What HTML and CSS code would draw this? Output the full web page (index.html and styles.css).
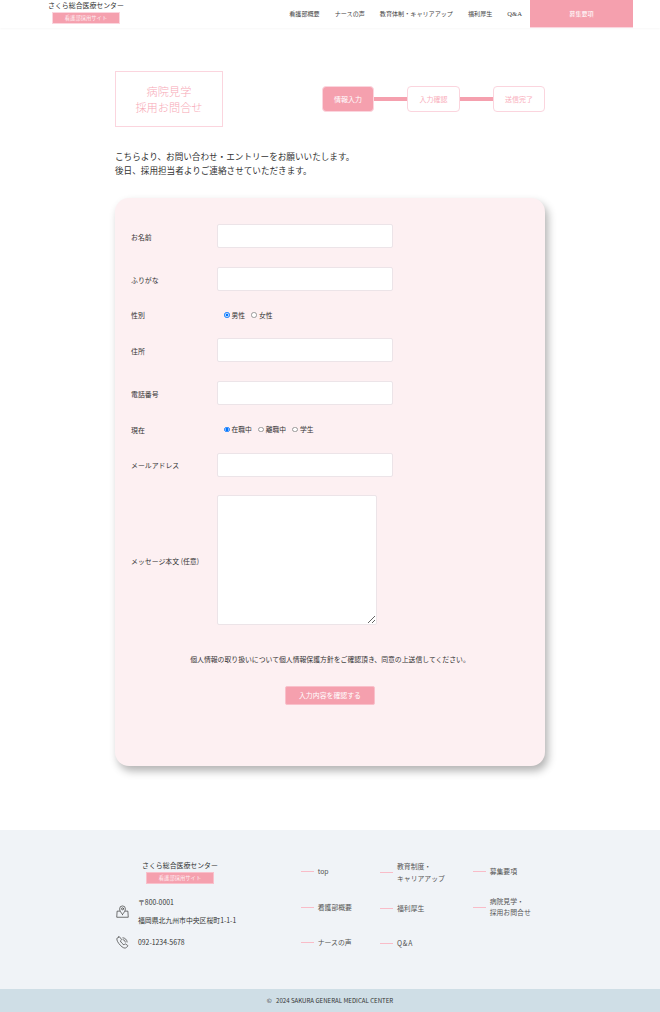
FILE: index.html
```html
<!DOCTYPE html>
<html lang="ja">
<head>
<meta charset="utf-8">
<title>病院見学・採用お問合せ</title>
<link rel="stylesheet" href="styles.css">
</head>
<body>
<header class="site-header">
  <a class="logo" href="#">
    <span class="logo-name">さくら総合医療センター</span>
    <span class="logo-badge">看護部採用サイト</span>
  </a>
  <nav class="global-nav">
    <a href="#">看護部概要</a>
    <a href="#">ナースの声</a>
    <a href="#">教育体制・キャリアアップ</a>
    <a href="#">福利厚生</a>
    <a class="nav-qa" href="#">Q&amp;A</a>
    <a class="nav-cta" href="#">募集要項</a>
  </nav>
</header>

<main class="main">
  <div class="title-row">
    <h1 class="page-title">病院見学<br>採用お問合せ</h1>
    <ol class="steps">
      <li class="step step-active">情報入力</li>
      <li class="step-line"></li>
      <li class="step step-middle">入力確認</li>
      <li class="step-line"></li>
      <li class="step">送信完了</li>
    </ol>
  </div>
  <p class="intro">こちらより、お問い合わせ・エントリーをお願いいたします。<br>後日、採用担当者よりご連絡させていただきます。</p>

  <form class="card">
    <div class="fields">
      <div class="row"><label class="label">お名前</label><input class="input" type="text"></div>
      <div class="row"><label class="label">ふりがな</label><input class="input" type="text"></div>
      <div class="row row-radio">
        <span class="label">性別</span>
        <div class="radios">
          <label class="radio"><input type="radio" name="sex" checked>男性</label>
          <label class="radio"><input type="radio" name="sex">女性</label>
        </div>
      </div>
      <div class="row"><label class="label">住所</label><input class="input" type="text"></div>
      <div class="row"><label class="label">電話番号</label><input class="input" type="text"></div>
      <div class="row row-radio">
        <span class="label">現在</span>
        <div class="radios">
          <label class="radio"><input type="radio" name="now" checked>在職中</label>
          <label class="radio"><input type="radio" name="now">離職中</label>
          <label class="radio"><input type="radio" name="now">学生</label>
        </div>
      </div>
      <div class="row"><label class="label">メールアドレス</label><input class="input" type="text"></div>
      <div class="row row-message"><label class="label">メッセージ本文 (任意)</label><textarea class="textarea"></textarea></div>
    </div>
    <p class="privacy">個人情報の取り扱いについて個人情報保護方針をご確認頂き、同意の上送信してください。</p>
    <button class="submit" type="button">入力内容を確認する</button>
  </form>
</main>

<footer class="site-footer">
  <div class="footer-body">
    <div class="footer-info">
      <a class="logo logo-footer" href="#">
        <span class="logo-name">さくら総合医療センター</span>
        <span class="logo-badge">看護部採用サイト</span>
      </a>
      <div class="contact contact-address">
        <svg class="contact-icon" viewBox="0 0 14 14" fill="none" stroke="#444" stroke-width=".8" stroke-linejoin="round" stroke-linecap="round">
          <path d="M4 6.6H1.2L.8 13.2h12.4l-.4-6.6H10"/>
          <path d="M7 10.2C5.4 8.2 3.9 6.2 3.9 4.1a3.1 3.1 0 0 1 6.2 0c0 2.1-1.5 4.1-3.1 6.1z"/>
          <circle cx="7" cy="4.1" r="1.1"/>
        </svg>
        <div class="contact-text">
          <p>〒800-0001</p>
          <p>福岡県北九州市中央区桜町1-1-1</p>
        </div>
      </div>
      <div class="contact contact-phone">
        <svg class="contact-icon" viewBox="0 0 14 14" fill="none" stroke="#444" stroke-width=".8" stroke-linejoin="round" stroke-linecap="round">
          <path d="M2.9 1 1.3 2.2C.5 3 .9 5.2 3 8c2.2 3 4.8 5 6.6 5 .8 0 1.3-.4 2.9-1.8.4-.4.3-.9-.1-1.2L10.4 8.7c-.4-.3-.8-.2-1.1.1l-.7.8C7.3 9 5.2 6.6 4.7 5.3l.9-.7c.3-.3.4-.7.2-1.1L4.1 1.200C3.800.8 3.300.7 2.900 1z"/>
          <path d="M7.4 1.900a4.700 4.700 0 0 1 4.600 4.600M7.600 3.900a2.700 2.700 0 0 1 2.500 2.600"/>
        </svg>
        <p class="contact-text">092-1234-5678</p>
      </div>
    </div>
    <div class="footer-links">
      <ul class="link-col link-col-1">
        <li><a href="#">top</a></li>
        <li><a href="#">看護部概要</a></li>
        <li><a href="#">ナースの声</a></li>
      </ul>
      <ul class="link-col link-col-2">
        <li><a href="#">教育制度・<br>キャリアアップ</a></li>
        <li><a href="#">福利厚生</a></li>
        <li><a class="link-qa" href="#">Q&amp;A</a></li>
      </ul>
      <ul class="link-col link-col-3">
        <li><a href="#">募集要項</a></li>
        <li><a href="#">病院見学・<br>採用お問合せ</a></li>
      </ul>
    </div>
  </div>
  <p class="copyright">©&nbsp;&nbsp;&nbsp;2024 SAKURA GENERAL MEDICAL CENTER</p>
</footer>
</body>
</html>
```

FILE: styles.css
```css
* { box-sizing: border-box; }
html, body { margin: 0; padding: 0; }
body {
  width: 660px;
  min-height: 1012px;
  background: #fff;
  color: #333;
  font-family: "Noto Sans CJK JP", "Noto Sans", sans-serif;
  font-size: 7px;
  overflow-x: hidden;
}
a { color: inherit; text-decoration: none; }
p, h1, ol, ul { margin: 0; padding: 0; list-style: none; }

/* header */
.site-header {
  height: 28px;
  padding: 0 27px 0 48px;
  display: flex;
  justify-content: space-between;
  box-shadow: 0 1px 2px rgba(0, 0, 0, .03);
}
.logo { display: flex; flex-direction: column; align-items: center; width: 76px; }
.logo-name { font-size: 6.9px; line-height: 10px; color: #333; white-space: nowrap; }
.logo-badge {
  margin-top: 2px;
  width: 68px;
  height: 12px;
  background: #f5a0ae;
  border: 1px solid #fbd5de;
  color: #fdeef1;
  font-size: 5.3px;
  line-height: 10px;
  text-align: center;
}
.global-nav { display: flex; align-items: center; height: 27px; font-size: 6.1px; color: #444; }
.global-nav a { margin-left: 15px; white-space: nowrap; }
.global-nav .nav-qa { margin-right: -7px; font-family: "Liberation Serif", serif; font-size: 6.6px; }
.global-nav .nav-cta {
  width: 103px;
  height: 28px;
  line-height: 27px;
  text-align: center;
  background: #f5a0ae;
  border-bottom: 1px solid #fbd5de;
  color: #fff;
  align-self: flex-start;
}

/* title */
.main { padding: 43px 115px 0; }
.title-row { display: flex; justify-content: space-between; align-items: center; }
.page-title {
  width: 108px;
  height: 56px;
  border: 1px solid #fbd5de;
  color: #f7a8b6;
  font-size: 11.2px;
  font-weight: 300;
  line-height: 16px;
  text-align: center;
  padding-top: 11px;
}
.steps { display: flex; align-items: center; }
.step {
  width: 52px;
  height: 26px;
  border: 1px solid #fbd5de;
  border-radius: 4px;
  color: #f9aebb;
  font-size: 7px;
  line-height: 24px;
  text-align: center;
}
.step-middle { width: 53px; }
.step-active { background: #f5a0ae; color: #fff; }
.step-line { width: 33px; height: 4px; background: #f5a0ae; }
.intro { margin-top: 21.6px; font-size: 8.6px; line-height: 14.2px; color: #333; white-space: nowrap; }

/* form card */
.card {
  margin-top: 21px;
  height: 568px;
  padding: 26px 16px 0;
  background: #fdf0f2;
  border-radius: 14px;
  box-shadow: 3px 5px 8px rgba(0, 0, 0, .3);
  display: flex;
  flex-direction: column;
  align-items: center;
}
.fields { align-self: stretch; display: flex; flex-direction: column; gap: 19.2px; }
.row { display: flex; align-items: center; }
.label { width: 86px; flex: none; padding-top: 1.5px; font-size: 6.9px; color: #333; white-space: nowrap; }
.input {
  width: 176px;
  height: 24px;
  background: #fff;
  border: 1px solid #ece4e8;
  border-radius: 2px;
  padding: 0 4px;
  margin: 0;
}
.row-radio { height: 8.7px; }
.radios { display: flex; gap: 6.3px; padding: 1px 0 0 7px; }
.radio { display: flex; align-items: center; font-size: 6.8px; line-height: 9px; color: #333; white-space: nowrap; }
.radio input {
  appearance: none;
  flex: none;
  width: 5.5px;
  height: 5.5px;
  margin: 0 2px 0 0;
  background: #fff;
  border: .6px solid #999;
  border-radius: 50%;
}
.radio input:checked {
  border-color: #0075ff;
  background: radial-gradient(circle, #0075ff 0 1.3px, #fff 1.7px);
}
.row-message { margin-top: -.8px; }
.textarea {
  display: block;
  width: 160px;
  height: 130px;
  margin: 0;
  background: #fff;
  border: 1px solid #ece4e8;
  border-radius: 2px;
}
.privacy { margin-top: 28px; font-size: 6.85px; line-height: 12px; color: #333; white-space: nowrap; }
.submit {
  margin-top: 21px;
  width: 90px;
  height: 19px;
  padding: 0;
  background: #f5a0ae;
  border: 1px solid #f9c0cb;
  border-radius: 2px;
  color: #fff;
  font-family: inherit;
  font-size: 6.9px;
  line-height: 17px;
}

/* footer */
.site-footer { margin-top: 64px; background: #f0f3f7; }
.footer-body { height: 159px; padding: 30px 0 0 115px; display: flex; }
.footer-info { width: 185.7px; flex: none; }
.logo-footer { margin-left: 27px; }
.logo-footer .logo-badge { border-color: #f9c0cb; }
.contact { display: flex; align-items: center; color: #333; }
.contact-icon { width: 13px; height: 13px; flex: none; margin: 0 9px 0 1px; }
.contact-address { margin-top: 9px; }
.contact-phone { margin-top: 4px; }
.contact-text { font-size: 6.85px; line-height: 18px; white-space: nowrap; }
.footer-links { display: flex; align-items: flex-start; margin-top: -6px; font-size: 6.85px; color: #555; }
.link-col { display: flex; flex-direction: column; }
.link-col-1 { width: 79.3px; }
.link-col-2 { width: 92.7px; margin-top: 1px; }
.link-col li { height: 35.5px; display: flex; align-items: center; white-space: nowrap; }
.link-col a { display: block; line-height: 11.5px; }
.link-col li::before {
  content: "";
  width: 13px;
  height: 1px;
  background: #f9bcc8;
  margin-right: 4px;
  flex: none;
}
.link-col .link-qa { letter-spacing: .8px; }
.copyright {
  height: 23px;
  background: #cfdee6;
  color: #333;
  font-size: 6.1px;
  line-height: 23px;
  text-align: center;
}
```
